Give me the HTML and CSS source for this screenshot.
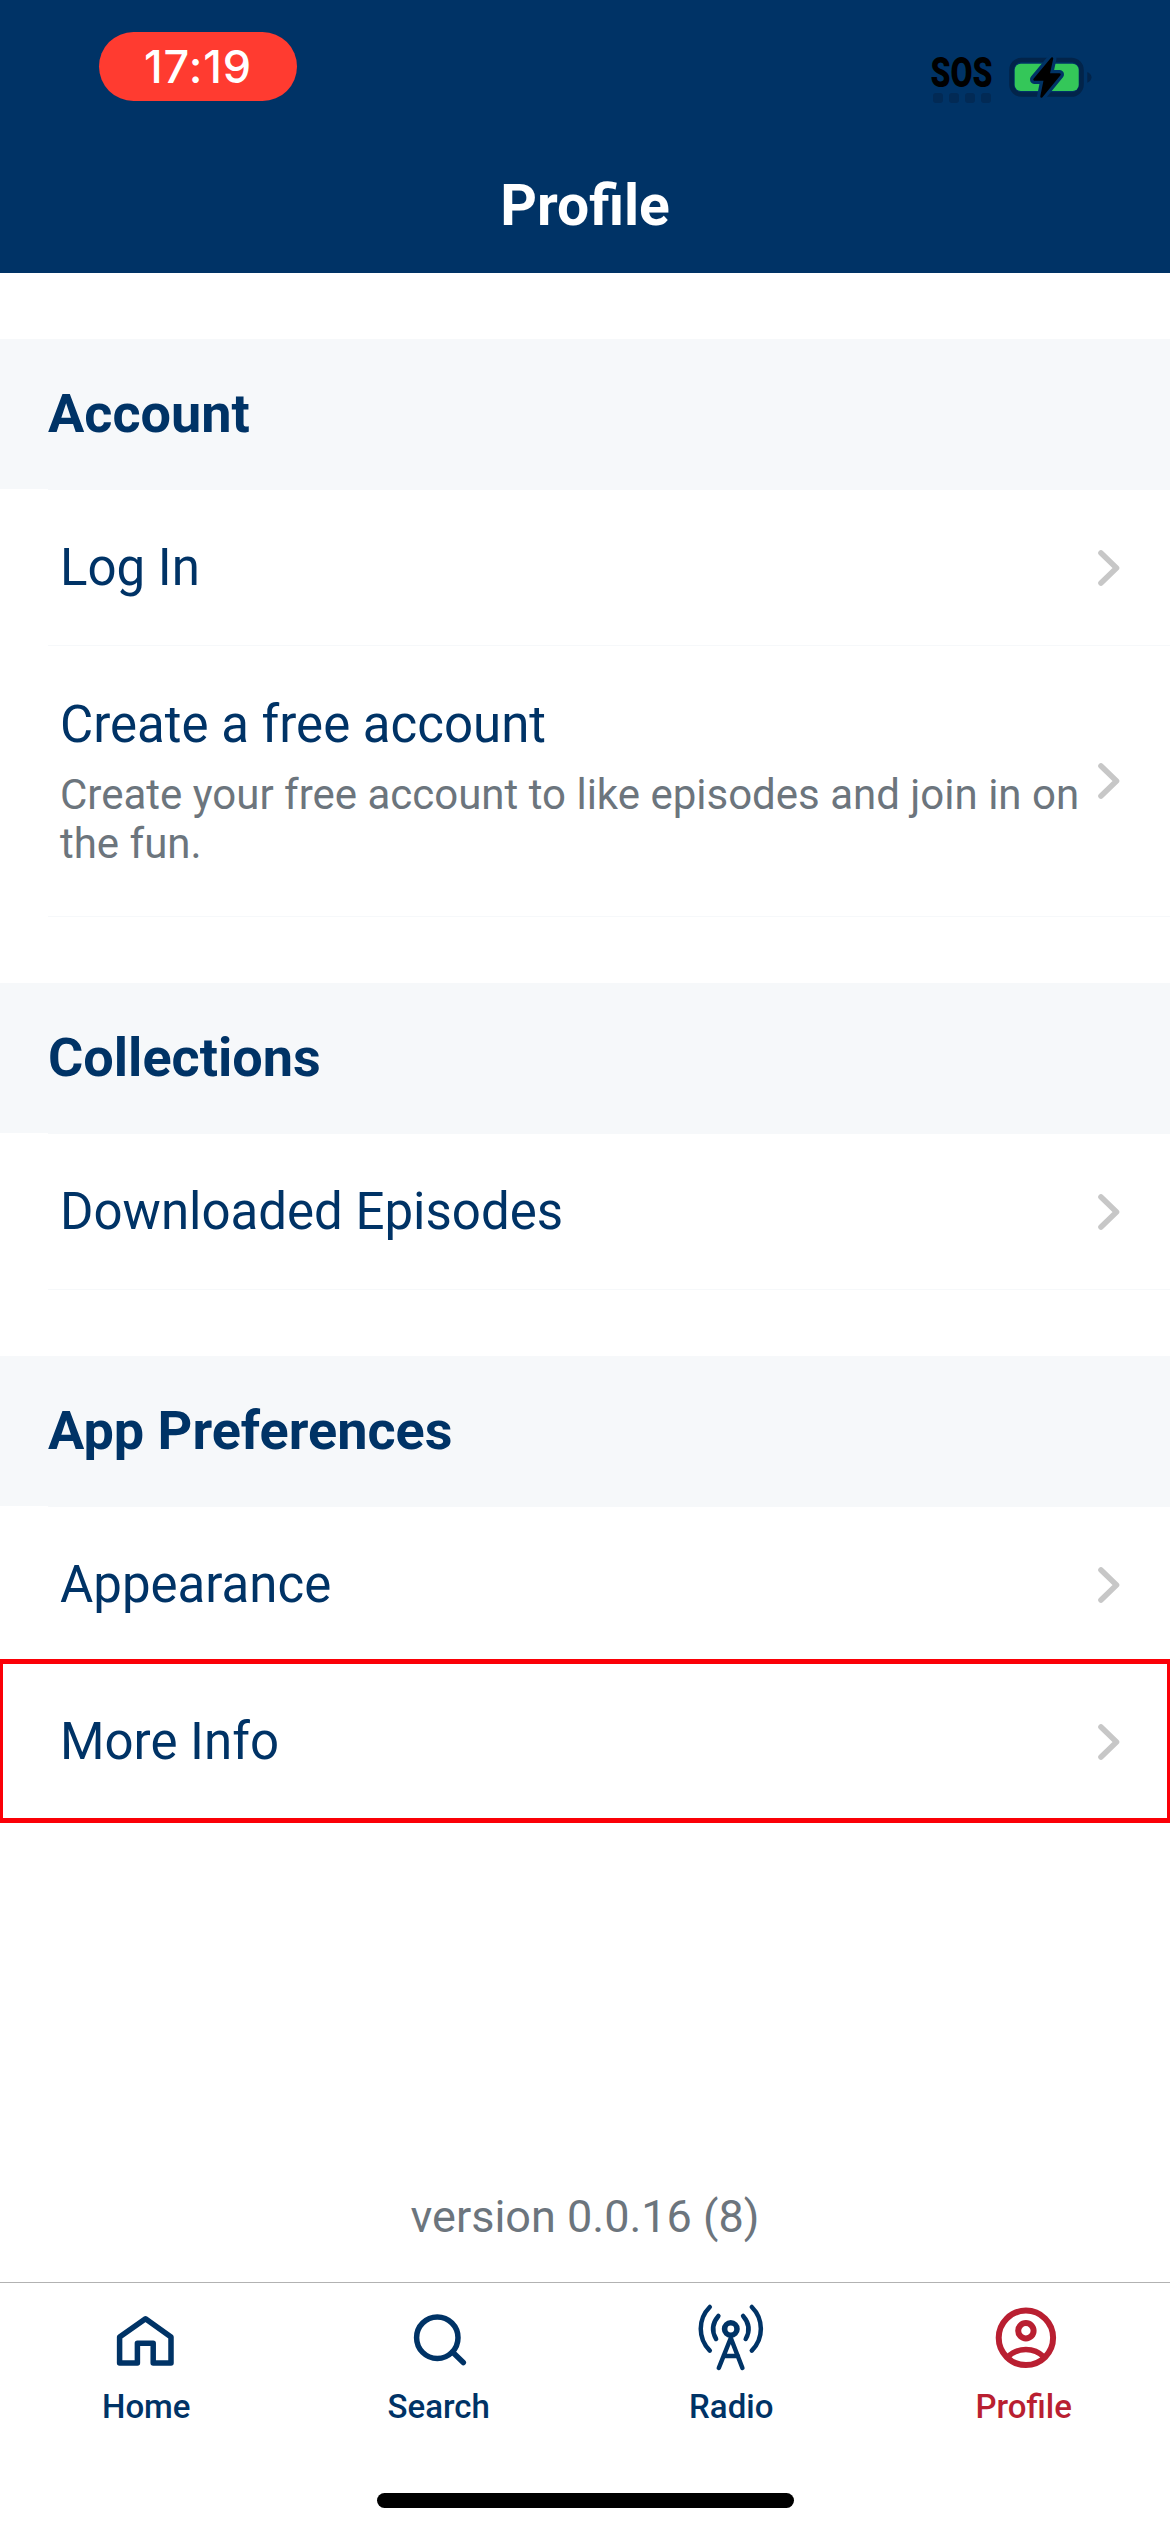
FILE: index.html
```html
<!DOCTYPE html>
<html lang="en">
<head>
<meta charset="utf-8">
<title>Profile</title>
<link rel="stylesheet" href="styles.css">
</head>
<body>
<div class="app">
  <header class="header">
    <div class="status">
      <div class="clock"><span class="clock-text">17:19</span></div>
      <svg class="signal" width="170" height="76" viewBox="925 32 170 76" role="img" aria-label="SOS only, battery charging">
        <text class="sos" x="930.5" y="87" textLength="62" lengthAdjust="spacingAndGlyphs">SOS</text>
        <g fill="#022a55">
          <rect x="933" y="93" width="10" height="10" rx="3"/>
          <rect x="949" y="93" width="10" height="10" rx="3"/>
          <rect x="965" y="93" width="10" height="10" rx="3"/>
          <rect x="981" y="93" width="10" height="10" rx="3"/>
        </g>
        <rect x="1011.5" y="60" width="70" height="34.5" rx="10" fill="none" stroke="#02244a" stroke-width="4.6"/>
        <path d="M1087.3 72c2.6 1 4.2 3 4.2 5.3s-1.6 4.400-4.200 5.400z" fill="#02244a"/>
        <rect x="1014.700" y="63.700" width="64" height="27.300" rx="6" fill="#34c759"/>
        <path d="M1052 58.500L1034.500 79.500H1045L1041.500 96.500L1059.500 74.500H1048.500Z" fill="#003366" stroke="#003366" stroke-width="9" stroke-linejoin="round"/>
        <path d="M1052 58.500L1034.500 79.500H1045L1041.500 96.500L1059.500 74.500H1048.500Z" fill="#000" stroke="#000" stroke-width="2.500" stroke-linejoin="round"/>
      </svg>
    </div>
    <h1 class="title">Profile</h1>
  </header>

  <main class="content">
    <section class="section">
      <h2 class="section-title">Account</h2>
      <div class="rows">
        <a class="row">
          <span class="row-title">Log In</span>
          <svg class="chevron" viewBox="0 0 22 36"><path d="M3 3L18.500 18L3 33"/></svg>
        </a>
        <a class="row row-tall">
          <span class="row-body">
            <span class="row-title">Create a free account</span>
            <span class="row-note">Create your free account to like episodes and join in on<br>the fun.</span>
          </span>
          <svg class="chevron" viewBox="0 0 22 36"><path d="M3 3L18.500 18L3 33"/></svg>
        </a>
      </div>
    </section>

    <section class="section">
      <h2 class="section-title">Collections</h2>
      <div class="rows">
        <a class="row">
          <span class="row-title">Downloaded Episodes</span>
          <svg class="chevron" viewBox="0 0 22 36"><path d="M3 3L18.500 18L3 33"/></svg>
        </a>
      </div>
    </section>

    <section class="section">
      <h2 class="section-title">App Preferences</h2>
      <div class="rows">
        <a class="row">
          <span class="row-title">Appearance</span>
          <svg class="chevron" viewBox="0 0 22 36"><path d="M3 3L18.500 18L3 33"/></svg>
        </a>
        <a class="row row-marked">
          <span class="row-title">More Info</span>
          <svg class="chevron" viewBox="0 0 22 36"><path d="M3 3L18.500 18L3 33"/></svg>
        </a>
      </div>
    </section>

    <p class="version">version 0.0.16 (8)</p>
  </main>

  <nav class="tabs">
    <a class="tab">
      <svg class="tab-icon" viewBox="0 0 72 72" stroke-width="5.500"><path d="M9.600 34L35.500 15.700L61 34V60H43.200V40.200H27.400V60H9.600Z"/></svg>
      <span class="tab-label">Home</span>
    </a>
    <a class="tab">
      <svg class="tab-icon" viewBox="0 0 72 72" stroke-width="5.500"><circle cx="34.300" cy="34.700" r="20.700"/><path d="M49.500 49L60.300 59.500"/></svg>
      <span class="tab-label">Search</span>
    </a>
    <a class="tab">
      <svg class="tab-icon" viewBox="0 0 72 72" stroke-width="4.500">
        <circle cx="35.800" cy="26" r="6.200" stroke-width="5.600"/>
        <path d="M23.800 65L35.800 35L47.400 65M28.500 53H43"/>
        <path d="M23.400 13Q14 24 21.100 36M48.100 13Q57.600 24 50.700 36"/>
        <path d="M14.800 4A30.900 30.900 0 0 0 14.800 47.700M56.800 4A30.900 30.900 0 0 1 56.800 47.700"/>
      </svg>
      <span class="tab-label">Radio</span>
    </a>
    <a class="tab tab-active">
      <svg class="tab-icon" viewBox="0 0 72 72" stroke-width="6">
        <circle cx="37.900" cy="34.800" r="27.200"/>
        <circle cx="37.900" cy="27.700" r="7.700"/>
        <path d="M19.800 54A25.500 25.500 0 0 1 56 54" stroke-width="5.500"/>
      </svg>
      <span class="tab-label">Profile</span>
    </a>
  </nav>
  <div class="home-indicator"></div>
</div>
</body>
</html>
```
FILE: styles.css
```css
* {
  box-sizing: border-box;
}

body {
  margin: 0;
  background: #fff;
  color: #003366;
  font-family: Roboto, "Liberation Sans", sans-serif;
}

h1,
h2,
p {
  margin: 0;
}

.app {
  display: flex;
  flex-direction: column;
  width: 1170px;
  height: 2532px;
  overflow: hidden;
}

.header {
  flex: none;
  height: 273px;
  padding-top: 32px;
  background: #003366;
}

.status {
  display: flex;
  justify-content: space-between;
  height: 109px;
  padding: 0 75px 0 99px;
}

.clock {
  display: flex;
  align-items: center;
  justify-content: center;
  width: 198px;
  height: 69px;
  border-radius: 35px;
  background: #ff3b30;
}

.clock-text {
  color: #fff;
  font: 500 45px/1 Inter, sans-serif;
  letter-spacing: 0.9px;
}

.signal {
  overflow: visible;
}

.sos {
  font: 900 42px Roboto, sans-serif;
  fill: #000;
}

.title {
  color: #fff;
  font-size: 57px;
  font-weight: 700;
  line-height: 130px;
  text-align: center;
}

.content {
  display: flex;
  flex: 1;
  flex-direction: column;
}

.section {
  margin-top: 66px;
}

.section-title {
  height: 150px;
  padding-left: 48px;
  background: #f6f8fa;
  font-size: 54px;
  font-weight: 700;
  line-height: 149px;
}

.rows {
  padding-top: 1px;
  padding-left: 48px;
  background: linear-gradient(#f6f8fa, #f6f8fa) 48px 0 / 100% 1px no-repeat;
}

.row {
  display: flex;
  align-items: center;
  justify-content: space-between;
  height: 156px;
  padding: 0 50px 0 12px;
  border-bottom: 1px solid #f6f8fa;
}

.row-tall {
  height: 271px;
}

.row-body {
  display: flex;
  flex-direction: column;
  gap: 15px;
}

.row-title {
  font-size: 51px;
  line-height: 60px;
}

.row-note {
  color: #6c757d;
  font-size: 42px;
  line-height: 49px;
  white-space: nowrap;
}

.chevron {
  flex: none;
  width: 22px;
  height: 36px;
  fill: none;
  stroke: #c7c7c7;
  stroke-width: 5.6;
  stroke-linecap: round;
  stroke-linejoin: round;
}

.row-marked {
  height: 164px;
  margin: -4px 0 0 -48px;
  padding: 1px 47px 0 57px;
  border: solid #fb0007;
  border-width: 5px 3px;
}

.version {
  margin: auto 0 38px;
  color: #6c757d;
  font-size: 45px;
  line-height: 54px;
  text-align: center;
}

.tabs {
  display: grid;
  flex: none;
  grid-template-columns: repeat(4, 1fr);
  height: 211px;
  border-top: 1px solid #b2b2b2;
}

.tab {
  display: flex;
  flex-direction: column;
  align-items: center;
  padding-top: 20px;
}

.tab-active {
  color: #b91f31;
}

.tab-icon {
  width: 72px;
  height: 72px;
  fill: none;
  stroke: currentColor;
  stroke-linecap: round;
  stroke-linejoin: round;
}

.tab-label {
  margin-top: 12px;
  font-size: 33px;
  font-weight: 500;
  line-height: 39px;
}

.home-indicator {
  flex: none;
  width: 417px;
  height: 15px;
  margin: 0 auto 24px;
  border-radius: 8px;
  background: #000;
}
```
